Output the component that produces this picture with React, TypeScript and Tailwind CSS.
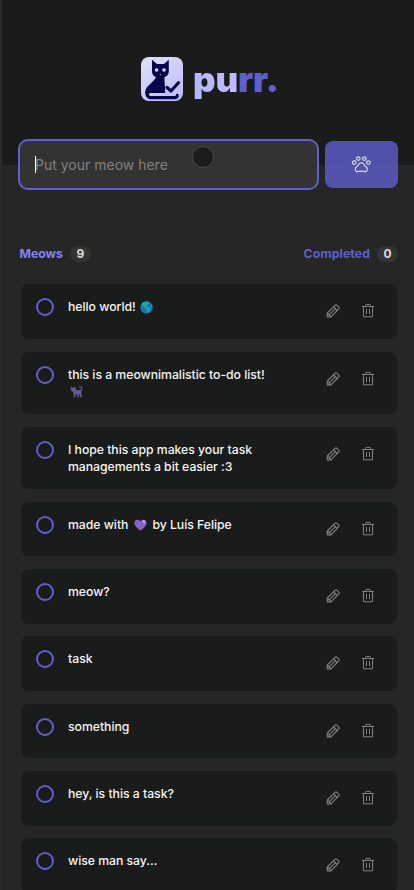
import React from "react";

function CatLogo() {
  return (
    <svg viewBox="0 0 42 44" className="h-[44px] w-[42px] shrink-0">
      <defs>
        <linearGradient id="tile" x1="0" y1="0" x2="0.7" y2="1">
          <stop offset="0" stopColor="#e2e0fc" />
          <stop offset="1" stopColor="#bfbff7" />
        </linearGradient>
      </defs>
      <rect width="42" height="44" rx="8" fill="url(#tile)" />
      <path
        d="M11 2.8 L16 7 H23 L27.8 2.8 V14.5 C27.8 17.5 25.6 19.6 23.4 20.2 C23.4 25 24.2 30 24.2 36 H9.5 C8.5 36 8 36.5 8 37.2 C8 38.5 9 39 10.5 39 H33.5 C35.2 39 35.3 38.2 35 37.3 C36 36 38 36.8 37.7 39 C37.5 41.2 36 42.3 34 42.3 H10.5 C6 42.3 4 39 4.2 35 C4.6 28.5 12.3 26 15 20.2 C12.8 19.3 11 17.5 11 14.5 Z"
        fill="#07074a"
      />
      <path d="M26 30.5 L30 34 L37.5 25.7" fill="none" stroke="#07074a" strokeWidth="3.2" strokeLinecap="round" strokeLinejoin="round" />
      <circle cx="15.6" cy="13" r="1.8" fill="#d8d7fb" />
      <circle cx="23" cy="13" r="1.8" fill="#d8d7fb" />
      <path d="M18.6 17.2 H20.4 L19.5 18.2 Z" fill="#d8d7fb" />
    </svg>
  );
}

function Paw() {
  return (
    <svg viewBox="0 0 21 21" className="h-[21px] w-[21px]" fill="none" stroke="currentColor" strokeWidth="1.25">
      <circle cx="3.2" cy="8.6" r="1.8" />
      <circle cx="7.3" cy="4.6" r="1.8" />
      <circle cx="13.3" cy="4.6" r="1.8" />
      <circle cx="17.4" cy="8.6" r="1.8" />
      <path d="M10.3 8.6 C12.2 8.6 12.7 9.8 13.4 11.2 C14.2 12.8 16.4 12.8 16.3 15.3 C16.2 17.3 14.5 18 12.8 17.4 C11.2 16.9 9.4 16.9 7.8 17.4 C6.1 18 4.4 17.3 4.3 15.3 C4.2 12.8 6.4 12.8 7.2 11.2 C7.9 9.8 8.4 8.6 10.3 8.6 Z" />
    </svg>
  );
}

function Pencil() {
  return (
    <svg viewBox="0 0 14 14" className="h-[14px] w-[14px]" fill="none" stroke="currentColor" strokeWidth="1.15" strokeLinejoin="round">
      <path d="M1.3 12.8 V9 L9.2 1.2 Q10 .6 10.8 1.2 L12.8 3.2 Q13.4 4 12.8 4.8 L5 12.8 Z" />
      <path d="M7.6 2.9 L11.2 6.5 M9.4 4.7 L3.2 10.9 M1.3 9 L5 12.8" />
    </svg>
  );
}

function Trash() {
  return (
    <svg viewBox="0 0 14 14" className="h-[14px] w-[14px]" fill="none" stroke="currentColor" strokeWidth="1">
      <path d="M1 2.5 H13 M4.5 2.5 V1.2 Q4.6 .5 5.3 .5 H8.7 Q9.4 .5 9.5 1.2 V2.5 M2.5 2.5 V12.8 H11.5 V2.5 M5.5 5 V10 M8.5 5 V10" />
    </svg>
  );
}

function Globe() {
  return (
    <svg viewBox="0 0 13 13" className="mb-[2px] ml-[1.5px] inline-block h-[13px] w-[13px] align-middle">
      <circle cx="6.5" cy="6.5" r="6.2" fill="#1673bd" />
      <path d="M1.5 2.8 C3 .8 6 0 8.5 .7 L9.2 2.2 L7.6 3.5 L6.2 5 L7.8 6 L10.6 7.2 L9.8 9.8 L8 11.8 L6.7 9.5 L6.3 7.5 L3.8 6 L2.4 4.2 Z M11 3.2 L12.3 4.5 L12.4 6 L11.2 5 Z" fill="#1cab98" />
    </svg>
  );
}

function BlackCat() {
  return (
    <svg viewBox="0 0 13 13" className="mt-[2px] ml-[2px] block h-[13px] w-[13px]">
      <path d="M.8 1.2 L2.4 2.6 H4 L5.4 1.4 L5.5 4.5 L8 5.2 L10.3 5 C11.6 4.2 11.7 2.7 10.5 2.5 C9.7 2.3 9.2 2.8 8.9 2.2 C9.4 .5 12.5 .8 12.5 3.3 C12.5 5.1 11.6 5.5 11.4 6.5 L11.5 9 L12 12.2 H10.2 L9.7 9.6 L8.7 9.3 L9 12.2 H7.3 L6.8 9.4 H5.6 L5.4 12.2 H3.7 L3.6 8.6 L2.5 6.5 L.8 5.2 Z" fill="#635994" />
      <path d="M4.5 9 V12 M8 9.5 V12" stroke="#463e6c" strokeWidth=".7" />
    </svg>
  );
}

function Heart() {
  return (
    <svg viewBox="0 0 13 12" className="mr-[2px] mb-px ml-[2.5px] inline-block h-[12px] w-[13px] align-middle">
      <path d="M6.5 11.6 C4.2 9.7 .4 7 .4 3.7 C.4 .2 5 -.2 6.5 2.3 C8 -.2 12.6 .2 12.6 3.7 C12.6 7 8.8 9.7 6.5 11.6 Z" fill="#8864c8" />
      <ellipse cx="9.9" cy="2.7" rx="1.1" ry="1.6" fill="#c8b0ee" transform="rotate(-25 9.9 2.7)" />
    </svg>
  );
}

const tasks: { text: React.ReactNode; tall?: boolean }[] = [
  { text: <>hello world! <Globe /></> },
  { text: <>this is a meownimalistic to-do list! <BlackCat /></>, tall: true },
  { text: <>I hope this app makes your task<br />managements a bit easier :3</>, tall: true },
  { text: <>made with <Heart /> by Luís Felipe</> },
  { text: "meow?" },
  { text: "task" },
  { text: "something" },
  { text: "hey, is this a task?" },
  { text: "wise man say..." },
];

function Task({ text, tall }: { text: React.ReactNode; tall?: boolean }) {
  return (
    <li className={`flex shrink-0 items-start rounded-lg bg-[#1a1c1b] pr-[22px] pl-[15px] ${tall ? "h-[62.5px]" : "h-[54.8px]"}`}>
      <span className="mt-[14px] h-[18px] w-[18px] shrink-0 rounded-full border-2 border-[#5e60ce]" />
      <div className="mt-[14px] ml-[14px] w-[215px] text-[12.25px] leading-[17.2px] font-medium tracking-[-0.03px] whitespace-nowrap text-[#f5f5f5]">{text}</div>
      <div className="mt-[20.1px] ml-auto flex gap-[21px] text-[#808080]">
        <Pencil />
        <Trash />
      </div>
    </li>
  );
}

export default function App() {
  return (
    <div className="h-[890px] overflow-hidden border-l-2 border-[#2a2a2a] bg-[#262626] font-['Inter','Liberation_Sans',sans-serif]">
      <header className="flex h-[165px] items-start bg-[#1a1c1b] pt-[57px] pl-[139px]">
        <CatLogo />
        <h1 className="ml-[10px] text-[35px] leading-[44px] font-black tracking-[-0.2px] text-[#5e60ce]">
          <span className="bg-linear-to-r from-[#b5b8ff] to-[#c1bbfb] bg-clip-text text-transparent">pu</span>rr.
        </h1>
      </header>
      <main>
        <form className="relative -mt-[26px] flex items-center gap-[6px] pl-[16px]">
          <div className="flex h-[51px] w-[301px] items-center rounded-[10px] border-2 border-[#5e60ce] bg-[#333333] pl-[15px] text-[14px] text-[#808080]">
            <span className="-mr-px h-[17px] w-px bg-white" />
            <span>Put your meow here</span>
          </div>
          <button type="button" className="flex h-[47px] w-[73px] items-center justify-center rounded-lg bg-[#5e60ce]/80 text-[#d1dce0]">
            <Paw />
          </button>
          <span className="absolute top-[7px] left-[190px] h-[22px] w-[22px] rounded-full border border-[#484848] bg-[#1c1c1c]" />
        </form>
        <div className="mt-[56px] flex h-4 items-center justify-between pr-[16px] pl-[17.5px] text-[12.25px] font-bold">
          <div className="flex items-center gap-[7px] text-[#8284fa]">
            Meows
            <span className="flex h-4 w-[21px] items-center justify-center rounded-full bg-[#333333] text-[12px] leading-4 text-[#d9d9d9]">9</span>
          </div>
          <div className="flex items-center gap-[7px] tracking-[0.1px] text-[#5e60ce]">
            Completed
            <span className="flex h-4 w-[21px] items-center justify-center rounded-full bg-[#333333] text-[12px] leading-4 text-[#d9d9d9]">0</span>
          </div>
        </div>
        <ul className="mt-[22.4px] mr-[17px] ml-[19px] flex flex-col gap-[12.5px]">
          {tasks.map((task, i) => <Task key={i} {...task} />)}
        </ul>
      </main>
    </div>
  );
}
